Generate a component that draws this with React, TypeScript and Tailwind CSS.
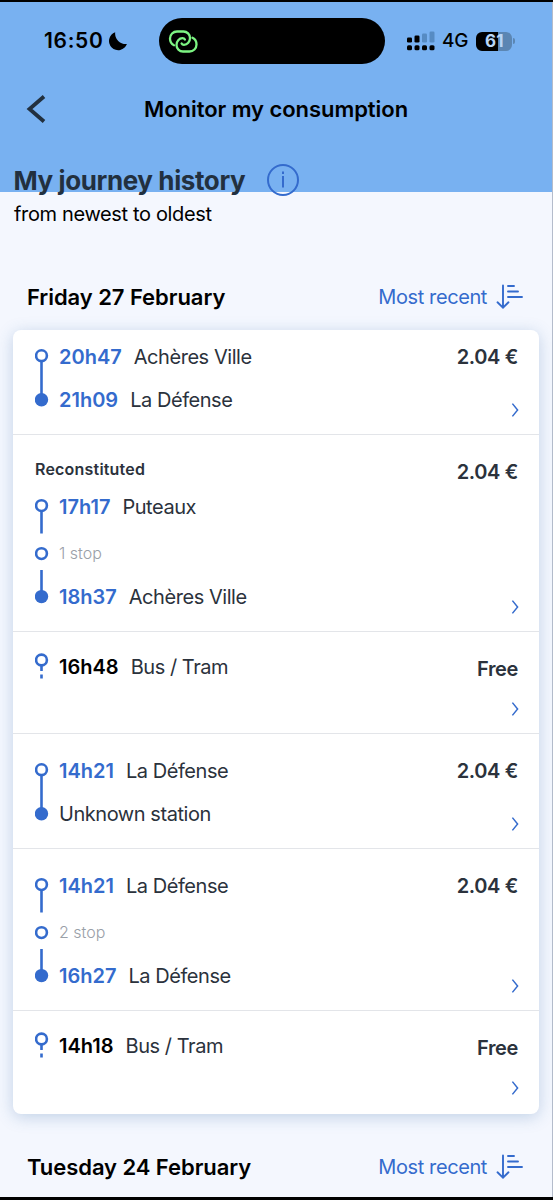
type Trip = {
  start: string;
  from: string;
  end?: string;
  to?: string;
  stops?: string;
  label?: string;
  price: string;
  kind: "direct" | "stops" | "bus";
  // row height + paddings, rows are not evenly spaced
  row: string;
  right: string;
};

const trips: Trip[] = [
  {
    start: "20h47",
    from: "Achères Ville",
    end: "21h09",
    to: "La Défense",
    price: "2.04 €",
    kind: "direct",
    row: "h-[105px] pt-[14px]",
    right: "pt-px pb-[17px]",
  },
  {
    label: "Reconstituted",
    start: "17h17",
    from: "Puteaux",
    end: "18h37",
    to: "Achères Ville",
    stops: "1 stop",
    price: "2.04 €",
    kind: "stops",
    row: "h-[197px] pt-[24px]",
    right: "pt-px pb-[17px]",
  },
  {
    start: "16h48",
    from: "Bus / Tram",
    price: "Free",
    kind: "bus",
    row: "h-[102px] pt-[22px]",
    right: "pt-[3px] pb-[17px]",
  },
  {
    start: "14h21",
    from: "La Défense",
    to: "Unknown station",
    price: "2.04 €",
    kind: "direct",
    row: "h-[115px] pt-[24px]",
    right: "pt-px pb-[17px]",
  },
  {
    start: "14h21",
    from: "La Défense",
    end: "16h27",
    to: "La Défense",
    stops: "2 stop",
    price: "2.04 €",
    kind: "stops",
    row: "h-[162px] pt-[24px]",
    right: "pt-px pb-[17px]",
  },
  {
    start: "14h18",
    from: "Bus / Tram",
    price: "Free",
    kind: "bus",
    row: "h-[103px] pt-[22px]",
    right: "pt-[3px] pb-[19px]",
  },
];

function Track({ kind }: { kind: Trip["kind"] }) {
  if (kind === "bus") {
    return (
      <svg width="14" height="28" viewBox="0 0 14 28" className="-mt-[1px] shrink-0" fill="none" stroke="#346bcd">
        <circle cx="6.5" cy="7" r="5.4" strokeWidth="2.6" />
        <path d="M6.5 12.5v5.5M6.5 21.5v4" strokeWidth="2.6" />
      </svg>
    );
  }
  if (kind === "stops") {
    return (
      <svg width="14" height="106" viewBox="0 0 14 106" className="mt-[4px] shrink-0" fill="none" stroke="#346bcd">
        <circle cx="6.5" cy="7.6" r="5.4" strokeWidth="2.6" />
        <path d="M6.5 13v22.6M6.5 72v22" strokeWidth="2.6" />
        <circle cx="6.5" cy="55.6" r="5.4" strokeWidth="2.6" />
        <circle cx="6.5" cy="98.6" r="6.7" fill="#346bcd" stroke="none" />
      </svg>
    );
  }
  return (
    <svg width="14" height="60" viewBox="0 0 14 60" className="mt-[4px] shrink-0" fill="none" stroke="#346bcd">
      <circle cx="6.5" cy="7.7" r="5.4" strokeWidth="2.6" />
      <path d="M6.5 13v35" strokeWidth="2.6" />
      <circle cx="6.5" cy="51.8" r="6.7" fill="#346bcd" stroke="none" />
    </svg>
  );
}

function Stop({ time, place, dark }: { time?: string; place?: string; dark?: boolean }) {
  return (
    <div className="flex h-6 items-center gap-[12px] whitespace-nowrap text-[20px] leading-6">
      {time && (
        <span className={`font-semibold ${dark ? "text-black" : "text-[#346bcd]"}`}>{time}</span>
      )}
      <span className="tracking-[-0.45px] text-[#2b323c]">{place}</span>
    </div>
  );
}

function TripRow({ trip, last }: { trip: Trip; last: boolean }) {
  return (
    <div className={`flex justify-between pr-[20px] pl-[22px] ${trip.row} ${last ? "" : "border-b border-[#e3e5e9]"}`}>
      <div>
        {trip.label && (
          <div className="mb-[14px] h-[21px] text-[16px] leading-[21px] font-semibold tracking-[0.2px] text-[#2b323c]">
            {trip.label}
          </div>
        )}
        <div className="flex gap-[10px]">
          <Track kind={trip.kind} />
          <div className="pt-px">
            <Stop time={trip.start} place={trip.from} dark={trip.kind === "bus"} />
            {trip.stops && (
              <div className="mt-[22px] mb-[20px] h-6 text-[16px] leading-6 font-light text-[#9aa0a8]">
                {trip.stops}
              </div>
            )}
            {trip.to && (
              <div className={trip.stops ? "" : "mt-[19px]"}>
                <Stop time={trip.end} place={trip.to} />
              </div>
            )}
          </div>
        </div>
      </div>
      <div className={`flex flex-col items-end justify-between ${trip.right}`}>
        <span className="pr-px text-[20px] leading-6 font-semibold tracking-[-0.35px] text-[#2b323c]">
          {trip.price}
        </span>
        <svg width="8" height="14" viewBox="0 0 8 14" fill="none" stroke="#346bcd" strokeWidth="1.5">
          <path d="M1.4.6 6.6 7 1.4 13.4" />
        </svg>
      </div>
    </div>
  );
}

function DayHeading({ day }: { day: string }) {
  return (
    <div className="flex h-[30px] items-center justify-between pr-[29px] pl-[27px]">
      <h2 className="text-[22px] font-semibold tracking-[-0.06px] text-black">{day}</h2>
      <div className="flex items-center gap-[9px] text-[#346bcd]">
        <span className="text-[20px] tracking-[-0.4px]">Most recent</span>
        <svg width="27" height="26" viewBox="0 0 27 26" fill="none" stroke="currentColor" strokeWidth="1.9" strokeLinecap="round">
          <path d="M7 1.5v22M1.5 18.3 7 23.6l5.5-5.3M12 2h6M12 7.5h10M12 13h14" />
        </svg>
      </div>
    </div>
  );
}

function StatusBar() {
  return (
    <div className="flex h-[78px] items-center pl-[44px]">
      <div className="flex w-[115px] items-center gap-[5px]">
        <span className="text-[21px] font-semibold tracking-[0.7px] text-black">16:50</span>
        <svg width="19" height="19" viewBox="0 0 19 19">
          <path d="M6.2.3A9.2 9.2 0 1 0 17.9 12 10.5 10.5 0 0 1 6.2.3Z" />
        </svg>
      </div>
      <div className="flex h-[46px] w-[226px] items-center rounded-full bg-black pl-[9px]">
        <svg width="31" height="25" viewBox="0 0 31 25" fill="none" stroke="#7df583" strokeWidth="2.3" strokeLinecap="round">
          <path d="M6 16.2C3.5 15 2 12.6 2 9.5a7 7 0 0 1 7-7h6.5a6.5 6.5 0 0 1 6.5 6.5c0 3.8-2.6 6.8-6 6.8-1.2 0-2-.5-2.4-1.3" />
          <path
            d="M6 16.2C3.5 15 2 12.6 2 9.5a7 7 0 0 1 7-7h6.5a6.5 6.5 0 0 1 6.5 6.5c0 3.8-2.6 6.8-6 6.8-1.2 0-2-.5-2.4-1.3"
            transform="rotate(180 15.25 12.5)"
          />
        </svg>
      </div>
      <svg width="29" height="20" viewBox="0 0 29 20" className="ml-[21px]">
        <rect x="1" y="6.5" width="5" height="5" rx="1.3" />
        <rect x="8.5" y="4.5" width="5" height="7" rx="1.3" />
        <rect x="16" y="2.5" width="5" height="9" rx="1.3" fill="#568bc3" />
        <rect x="23.5" y=".5" width="5" height="11" rx="1.3" fill="#568bc3" />
        <rect x="1" y="14.3" width="5" height="5" rx="1.5" />
        <rect x="8.5" y="14.3" width="5" height="5" rx="1.5" />
        <rect x="16" y="14.3" width="5" height="5" rx="1.5" />
        <rect x="23.5" y="14.3" width="5" height="5" rx="1.5" />
      </svg>
      <span className="ml-[7px] pt-px text-[19px] font-medium tracking-[-0.2px] text-black">4G</span>
      <div className="ml-[8px] flex h-[19px] w-[36px] items-center justify-center rounded-[6px] bg-linear-to-r from-black from-61% to-[#5b86b3] to-61% text-[17px] leading-none font-bold text-[#b9d6f5]">
        61
      </div>
      <div className="ml-[1px] h-[6px] w-[2px] rounded-r-full bg-[#5b86b3]" />
    </div>
  );
}

export default function App() {
  return (
    <div className="h-[1200px] w-[553px] overflow-hidden border-t-2 border-b-3 border-black bg-[#f4f7fe] font-['Inter',sans-serif]">
      <div className="h-full border-r border-[#b4bccb]">
        <div className="h-[190px] bg-[#78b1f1]">
          <StatusBar />
          <div className="flex h-[58px] items-center justify-between px-[26px]">
            <svg width="20" height="28" viewBox="0 0 20 28" fill="none" stroke="#22303f" strokeWidth="3.8">
              <path d="M18 1.5 3.5 14 18 26.5" />
            </svg>
            <h1 className="text-[22px] font-semibold tracking-[-0.05px] whitespace-nowrap text-black">
              Monitor my consumption
            </h1>
            <div className="w-5" />
          </div>
          <div className="mt-[24px] flex h-[36px] items-center gap-[22px] pl-[13.5px]">
            <span className="text-[26px] font-bold tracking-[-0.4px] whitespace-nowrap text-[#22303f]">
              My journey history
            </span>
            <svg width="32" height="32" viewBox="0 0 32 32" className="-mt-px shrink-0" fill="none" stroke="#346bcd" strokeWidth="2">
              <circle cx="16" cy="16" r="15" />
              <path d="M16 12v11.5M16 7.5v2.4" />
            </svg>
          </div>
        </div>
        <p className="pt-[8px] pl-[14px] text-[20px] leading-[28px] tracking-[-0.35px] text-black">
          from newest to oldest
        </p>
        <div className="mt-[54px]">
          <DayHeading day="Friday 27 February" />
        </div>
        <div className="mt-[18px] mr-[13px] ml-[13px] rounded-lg bg-white shadow-[0_3px_16px_rgba(60,110,170,0.28)]">
          {trips.map((trip, i) => (
            <TripRow key={i} trip={trip} last={i === trips.length - 1} />
          ))}
        </div>
        <div className="mt-[38px]">
          <DayHeading day="Tuesday 24 February" />
        </div>
      </div>
    </div>
  );
}
